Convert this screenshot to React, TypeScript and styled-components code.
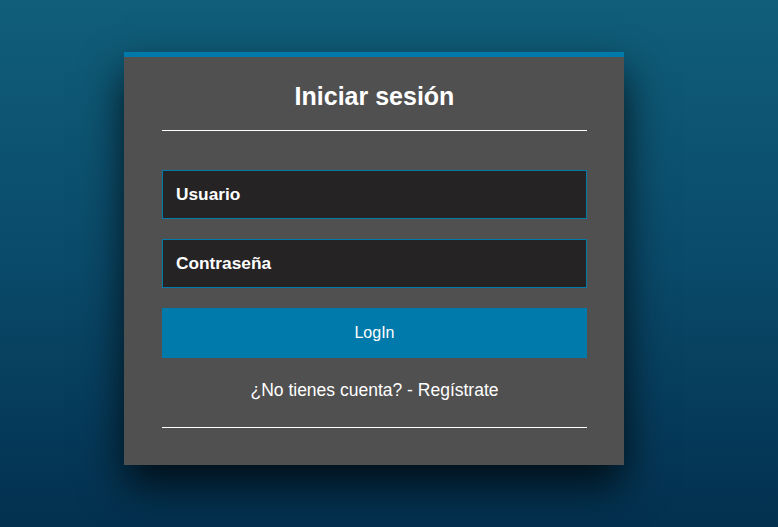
import React from "react";
import styled, { createGlobalStyle } from "styled-components";

const Global = createGlobalStyle`
  html, body { margin: 0; padding: 0; height: 100%; }
  body {
    font-family: "Liberation Sans", Arial, sans-serif;
    background: linear-gradient(to bottom, #105e7a 0%, #0a4a6a 50%, #03304f 100%);
    min-height: 527px;
  }
`;

const Page = styled.div`
  display: flex;
  justify-content: center;
  align-items: flex-start;
  padding-top: 52px;
  padding-right: 30px;
  min-height: 527px;
  box-sizing: border-box;
`;

const Card = styled.div`
  width: 500px;
  box-sizing: border-box;
  background: #505050;
  border-top: 5px solid #007aab;
  padding: 25px 37px 37px 38px;
  box-shadow: 0 20px 40px rgba(0, 0, 0, 0.75);
  display: flex;
  flex-direction: column;
`;

const Title = styled.h2`
  margin: 0;
  text-align: center;
  color: #fff;
  font-size: 25px;
  font-weight: bold;
  line-height: 28px;
`;

const Rule = styled.hr<{ $before: number; $after: number }>`
  border: none;
  border-top: 1px solid #ffffff;
  margin: ${(p) => p.$before}px 0 ${(p) => p.$after}px;
  height: 0;
`;

const Input = styled.input`
  box-sizing: border-box;
  width: 100%;
  height: 49px;
  background: #252324;
  border: 1px solid #007aab;
  color: #fff;
  font-family: "Liberation Sans", Arial, sans-serif;
  font-size: 17.3px;
  font-weight: bold;
  padding: 0 13px;
  margin: 0 0 20px;
  outline: none;
  &::placeholder { color: #fff; opacity: 1; }
`;

const Button = styled.button`
  height: 50px;
  width: 100%;
  background: #007aab;
  border: none;
  color: #fff;
  font-family: "Liberation Sans", Arial, sans-serif;
  font-size: 16px;
  cursor: pointer;
`;

const Footer = styled.p`
  margin: 22px 0 0;
  text-align: center;
  color: #fff;
  font-size: 17.5px;
  line-height: 21px;
`;

export default function App() {
  return (
    <>
      <Global />
      <Page>
        <Card>
          <Title>Iniciar sesión</Title>
          <Rule $before={20} $after={39} />
          <Input placeholder="Usuario" />
          <Input placeholder="Contraseña" type="password" />
          <Button>LogIn</Button>
          <Footer>¿No tienes cuenta? - Regístrate</Footer>
          <Rule $before={26} $after={0} />
        </Card>
      </Page>
    </>
  );
}
